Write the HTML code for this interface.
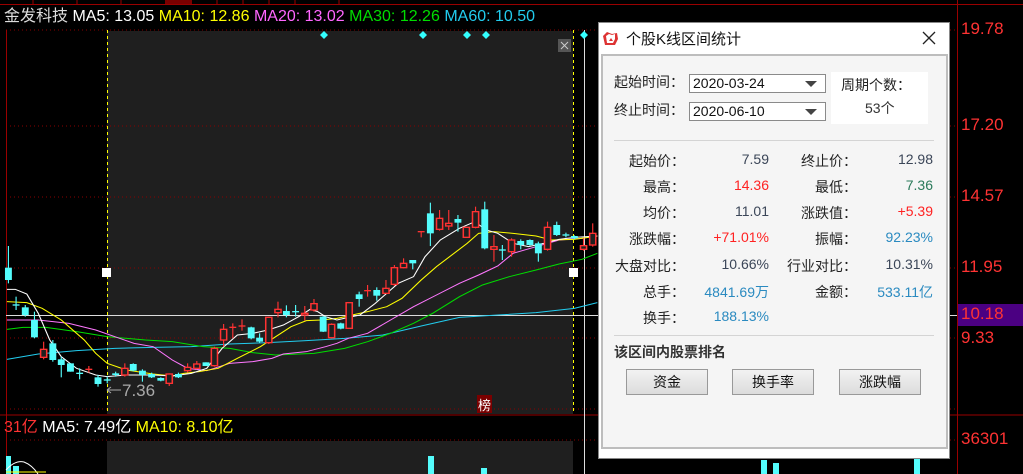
<!DOCTYPE html>
<html><head><meta charset="utf-8"><style>
*{margin:0;padding:0;box-sizing:border-box}
body{width:1023px;height:474px;background:#000;position:relative;overflow:hidden;font-family:"Liberation Sans","Noto Sans CJK SC",sans-serif}
.a{position:absolute}
.dlg{left:598px;top:22px;width:352px;height:437px;background:#fff;border:1px solid #888}
.panel{left:2px;top:31px;width:347px;height:395px;background:#f5f5f5;border:2px solid #bdbdbd}
.t{font-size:14px;color:#222;white-space:nowrap}
.cb{background:#fff;border:1px solid #8a8a8a;height:19px;width:137px;font-size:14px;padding-left:3px;line-height:17px;color:#111}
.cb:after{content:"";position:absolute;right:8px;top:6px;border-left:6px solid transparent;border-right:6px solid transparent;border-top:6px solid #444}
.btn{top:347px;width:82px;height:26px;border:1px solid #999;background:linear-gradient(#f2f2f2,#dcdcdc);font-size:14px;text-align:center;line-height:24px;color:#111}
.r{text-align:right}
.ax{font-size:17px;color:#f33}
</style></head><body>
<div class="a" style="left:0;top:0;width:1023px;height:5px;border-bottom:1px solid #9a0000"></div>
<div class="a" style="left:165px;top:0;width:27px;height:4px;background:#7a0000"></div>
<svg class="a" style="left:0;top:0" width="1023" height="5"><g stroke="#9a0000"><line x1="33" y1="0" x2="33" y2="4"/><line x1="77" y1="0" x2="77" y2="4"/><line x1="121" y1="0" x2="121" y2="4"/><line x1="217" y1="0" x2="217" y2="4"/><line x1="243" y1="0" x2="243" y2="4"/><line x1="269" y1="0" x2="269" y2="4"/><line x1="295" y1="0" x2="295" y2="4"/><line x1="339" y1="0" x2="339" y2="4"/></g></svg>
<div class="a" style="left:4px;top:7px;font-size:16px;white-space:nowrap;line-height:20px"><span style="color:#ddd">金发科技</span> <span style="color:#fff">MA5: 13.05</span> <span style="color:#ff0">MA10: 12.86</span> <span style="color:#f6f">MA20: 13.02</span> <span style="color:#0d0">MA30: 12.26</span> <span style="color:#2ce">MA60: 10.50</span></div>
<div class="a" style="left:107px;top:31px;width:466px;height:383px;background:#1f1f1f"></div>
<div class="a" style="left:107px;top:441px;width:466px;height:33px;background:#1f1f1f"></div>
<svg class="a" style="left:0;top:0" width="1023" height="474">
<g stroke="#8a0000" stroke-dasharray="1,3"><line x1="6" y1="30" x2="957" y2="30"/><line x1="6" y1="126" x2="957" y2="126"/><line x1="6" y1="197" x2="957" y2="197"/><line x1="6" y1="268" x2="957" y2="268"/><line x1="6" y1="338" x2="957" y2="338"/><line x1="6" y1="409" x2="957" y2="409"/><line x1="6" y1="440" x2="957" y2="440"/></g>
<line x1="6.5" y1="30" x2="6.5" y2="474" stroke="#9a0000"/>
<line x1="0" y1="415" x2="1023" y2="415" stroke="#9a0000"/>
<line x1="957.5" y1="0" x2="957.5" y2="474" stroke="#9a0000"/>
<g stroke="#ff0" stroke-dasharray="3,3"><line x1="107.5" y1="30" x2="107.5" y2="414"/><line x1="573.5" y1="30" x2="573.5" y2="414"/></g>
<line x1="584.5" y1="30" x2="584.5" y2="474" stroke="#ddd"/>
<line x1="6" y1="315.5" x2="957" y2="315.5" stroke="#ddd"/>
<rect x="102" y="268" width="9" height="9" fill="#fff"/><rect x="569" y="268" width="9" height="9" fill="#fff"/>
<g fill="#3ff"><path d="M324 31l4 4-4 4-4-4z"/><path d="M423 31l4 4-4 4-4-4z"/><path d="M467 31l4 4-4 4-4-4z"/><path d="M486 31l4 4-4 4-4-4z"/><path d="M584 31l4 4-4 4-4-4z"/></g>
<rect x="558" y="39" width="13" height="13" fill="#555"/><path d="M561 42l7 7M568 42l-7 7" stroke="#ccc"/>
<text x="122" y="396" fill="#aaa" font-size="17" font-family="Liberation Sans">7.36</text>
<path d="M107 390h14" stroke="#aaa"/><path d="M107 390l4-3M107 390l4 3" stroke="#aaa"/>
<rect x="477" y="395" width="15" height="18" fill="#7a0000"/><text x="478" y="410" fill="#fff" font-size="13" font-family="Noto Sans CJK SC">榜</text>
</svg>
<svg class="a" style="left:0;top:200px;overflow:visible" width="600" height="274" viewBox="0 0 1567 822" preserveAspectRatio="none">
<g fill="none" stroke-width="3">
<polyline stroke="#2ce" points="18,478 100,462 200,452 300,445 400,442 500,440 600,432 700,428 800,422 900,415 1000,405 1100,378 1200,352 1300,345 1400,338 1500,325 1560,308"/>
<polyline stroke="#0d0" points="18,388 60,382 120,382 200,395 280,410 380,420 450,425 530,440 600,445 660,458 720,465 820,460 900,445 960,425 1020,400 1080,370 1130,340 1200,290 1260,255 1330,230 1400,210 1460,192 1520,178 1560,160"/>
<polyline stroke="#f7f" points="18,360 100,360 180,370 250,390 300,410 350,430 400,440 450,480 490,505 540,512 600,490 660,485 710,475 740,462 800,455 850,440 880,430 910,415 960,400 1020,360 1080,320 1140,285 1200,250 1250,225 1300,198 1340,160 1400,140 1460,120 1520,115 1560,108"/>
<polyline stroke="#ff0" points="18,305 70,308 110,325 160,360 220,420 250,460 280,490 330,510 400,522 450,528 480,520 520,515 570,505 620,475 680,440 720,410 760,380 800,362 840,360 880,355 920,345 960,335 1010,320 1050,295 1100,240 1140,200 1180,165 1220,130 1250,100 1290,95 1340,100 1400,108 1440,120 1500,118 1560,108"/>
<polyline stroke="#fff" points="18,268 40,268 70,282 100,340 130,420 160,470 200,505 250,525 280,530 330,525 400,525 450,528 500,520 540,505 580,445 620,405 660,400 700,390 740,375 780,350 810,328 830,335 850,350 880,360 910,352 940,345 980,310 1040,250 1080,230 1110,170 1150,120 1200,85 1240,65 1270,90 1300,100 1340,130 1380,140 1420,130 1460,118 1500,112 1560,108"/>
</g>
<g id="c"></g>
</svg>
<script>
var C=[[22,'c',203,240,138,250],[42,'x',315,315,290,330],[66,'c',322,345,315,350],[90,'c',360,412,335,415],[114,'r',448,472,425,478],[138,'c',430,480,420,485],[160,'c',478,495,470,532],[184,'c',490,515,490,515],[208,'x',520,520,505,538],[232,'y',508,508,498,518],[256,'c',532,552,525,560],[280,'x',540,540,530,550],[302,'c',520,525,515,530],[326,'r',505,525,490,530],[348,'c',492,512,490,514],[372,'c',512,525,508,545],[396,'c',522,532,518,534],[420,'c',534,542,532,544],[442,'r',522,550,520,558],[466,'c',522,532,518,534],[490,'r',502,512,490,518],[514,'r',492,505,483,508],[538,'c',487,498,487,498],[560,'r',445,497,440,500],[584,'r',388,420,372,440],[608,'y',382,382,370,415],[632,'y',378,378,358,392],[656,'c',382,415,380,418],[678,'c',413,425,400,428],[702,'r',352,428,350,432],[726,'r',328,338,305,352],[748,'c',333,345,316,352],[772,'x',335,335,315,350],[796,'r',340,345,318,362],[820,'r',311,330,297,335],[844,'c',350,395,348,396],[866,'r',373,413,370,415],[890,'c',370,386,368,388],[912,'r',308,385,306,387],[938,'c',283,297,275,320],[960,'y',272,272,255,290],[984,'c',270,287,262,302],[1008,'r',265,280,240,282],[1030,'r',203,253,195,258],[1054,'r',190,203,175,205],[1078,'c',180,190,180,208],[1100,'y',95,95,95,112],[1124,'c',40,100,8,138],[1148,'r',55,88,30,92],[1172,'r',70,78,30,90],[1196,'c',57,68,45,95],[1218,'r',82,112,80,114],[1242,'r',35,82,20,85],[1266,'c',28,145,5,148],[1290,'r',140,148,105,185],[1312,'x',150,150,135,180],[1336,'r',120,155,115,170],[1360,'c',123,135,118,148],[1384,'c',120,135,118,137],[1406,'c',130,160,125,185],[1430,'r',82,148,65,152],[1454,'c',75,105,65,108],[1478,'x',105,105,98,112],[1500,'c',108,115,106,118],[1524,'r',137,148,115,152],[1548,'r',100,135,70,140]];
var s='';C.forEach(function(k){var x=k[0],t=k[1],col=(t=='c'||t=='x')?'#54fcfc':'#ff3232';
s+='<line x1="'+x+'" x2="'+x+'" y1="'+k[4]+'" y2="'+k[5]+'" stroke="'+col+'" stroke-width="3"/>';
if(t=='c')s+='<rect x="'+(x-9)+'" y="'+k[2]+'" width="18" height="'+Math.max(4,k[3]-k[2])+'" fill="#54fcfc"/>';
else if(t=='r')s+='<rect x="'+(x-8)+'" y="'+k[2]+'" width="16" height="'+Math.max(4,k[3]-k[2])+'" fill="#1f1f1f" stroke="#ff3232" stroke-width="4"/>';
else s+='<line x1="'+(x-9)+'" x2="'+(x+9)+'" y1="'+k[2]+'" y2="'+k[2]+'" stroke="'+col+'" stroke-width="4"/>';});
document.getElementById('c').innerHTML=s;
</script>
<div class="a" style="left:4px;top:418px;font-size:16px;white-space:nowrap;line-height:20px"><span style="color:#f33">31亿</span> <span style="color:#fff">MA5: 7.49亿</span> <span style="color:#ff0">MA10: 8.10亿</span></div>
<div class="a" style="left:6px;top:456px;width:5px;height:18px;background:#54fcfc"></div>
<div class="a" style="left:13px;top:466px;width:6px;height:8px;background:#54fcfc"></div>
<div class="a" style="left:428px;top:456px;width:6px;height:18px;background:#54fcfc"></div>
<div class="a" style="left:481px;top:468px;width:6px;height:6px;background:#54fcfc"></div>
<div class="a" style="left:761px;top:460px;width:6px;height:14px;background:#54fcfc"></div>
<div class="a" style="left:773px;top:463px;width:6px;height:11px;background:#54fcfc"></div>
<div class="a" style="left:914px;top:459px;width:6px;height:15px;background:#54fcfc"></div>
<svg class="a" style="left:0;top:440px" width="60" height="34"><path d="M6 30Q15 20 24 22Q32 25 38 34" stroke="#fff" fill="none"/><path d="M6 32h40" stroke="#ff0"/></svg>
<div class="a ax" style="left:961px;top:19px">19.78</div>
<div class="a ax" style="left:961px;top:115px">17.20</div>
<div class="a ax" style="left:961px;top:186px">14.57</div>
<div class="a ax" style="left:961px;top:257px">11.95</div>
<div class="a" style="left:958px;top:304px;width:65px;height:22px;background:#4b0082"></div>
<div class="a ax" style="left:961px;top:304px">10.18</div>
<div class="a ax" style="left:961px;top:328px">9.33</div>
<div class="a ax" style="left:961px;top:429px">36301</div>
<div class="a dlg">
 <svg class="a" style="left:2px;top:7px" width="18" height="16"><path d="M2 6l4-4 5 2 5-1 1 6-3 6H4z" fill="#d33"/><path d="M5 6l3-2 3 1 3-1v5l-2 4H6z" fill="#fff"/><path d="M10 8l2 3h-4z" fill="#d33"/></svg>
 <div class="a" style="left:27px;top:5px;font-size:15px;color:#111">个股K线区间统计</div>
 <svg class="a" style="left:323px;top:8px" width="14" height="14"><path d="M1 1l12 12M13 1L1 13" stroke="#222" stroke-width="1.3"/></svg>
 <div class="a panel">
  <div class="a t" style="left:11px;top:16px">起始时间：</div>
  <div class="a cb" style="left:86px;top:18px">2020-03-24</div>
  <div class="a t" style="left:11px;top:44px">终止时间：</div>
  <div class="a cb" style="left:86px;top:46px">2020-06-10</div>
  <div class="a" style="left:228px;top:16px;width:97px;height:52px;background:#fff"></div>
  <div class="a t" style="left:238px;top:19px">周期个数：</div>
  <div class="a t" style="left:262px;top:42px;color:#333">53个</div>
  <div class="a" style="left:11px;top:84px;width:320px;height:1px;background:#d4d4d4"></div>
  <div class="a t r" style="left:0;top:95px;width:82px">起始价：</div><div class="a t r" style="left:90px;top:95px;width:76px;color:#3b4658">7.59</div>
  <div class="a t r" style="left:170px;top:95px;width:84px">终止价：</div><div class="a t r" style="left:250px;top:95px;width:80px;color:#3b4658">12.98</div>
  <div class="a t r" style="left:0;top:121px;width:82px">最高：</div><div class="a t r" style="left:90px;top:121px;width:76px;color:#f22">14.36</div>
  <div class="a t r" style="left:170px;top:121px;width:84px">最低：</div><div class="a t r" style="left:250px;top:121px;width:80px;color:#2a7a5a">7.36</div>
  <div class="a t r" style="left:0;top:147px;width:82px">均价：</div><div class="a t r" style="left:90px;top:147px;width:76px;color:#3b4658">11.01</div>
  <div class="a t r" style="left:170px;top:147px;width:84px">涨跌值：</div><div class="a t r" style="left:250px;top:147px;width:80px;color:#f22">+5.39</div>
  <div class="a t r" style="left:0;top:173px;width:82px">涨跌幅：</div><div class="a t r" style="left:90px;top:173px;width:76px;color:#f22">+71.01%</div>
  <div class="a t r" style="left:170px;top:173px;width:84px">振幅：</div><div class="a t r" style="left:250px;top:173px;width:80px;color:#2a8ac0">92.23%</div>
  <div class="a t r" style="left:0;top:200px;width:82px">大盘对比：</div><div class="a t r" style="left:90px;top:200px;width:76px;color:#3b4658">10.66%</div>
  <div class="a t r" style="left:170px;top:200px;width:84px">行业对比：</div><div class="a t r" style="left:250px;top:200px;width:80px;color:#3b4658">10.31%</div>
  <div class="a t r" style="left:0;top:226px;width:82px">总手：</div><div class="a t r" style="left:90px;top:226px;width:76px;color:#2a8ac0">4841.69万</div>
  <div class="a t r" style="left:170px;top:226px;width:84px">金额：</div><div class="a t r" style="left:250px;top:226px;width:80px;color:#2a8ac0">533.11亿</div>
  <div class="a t r" style="left:0;top:252px;width:82px">换手：</div><div class="a t r" style="left:90px;top:252px;width:76px;color:#2a8ac0">188.13%</div>
  <div class="a" style="left:11px;top:279px;width:320px;height:1px;background:#d4d4d4"></div>
  <div class="a t" style="left:11px;top:286px;font-weight:bold;color:#333">该区间内股票排名</div>
  <div class="a btn" style="left:23px;top:313px">资金</div>
  <div class="a btn" style="left:129px;top:313px">换手率</div>
  <div class="a btn" style="left:236px;top:313px">涨跌幅</div>
 </div>
</div>
</body></html>
